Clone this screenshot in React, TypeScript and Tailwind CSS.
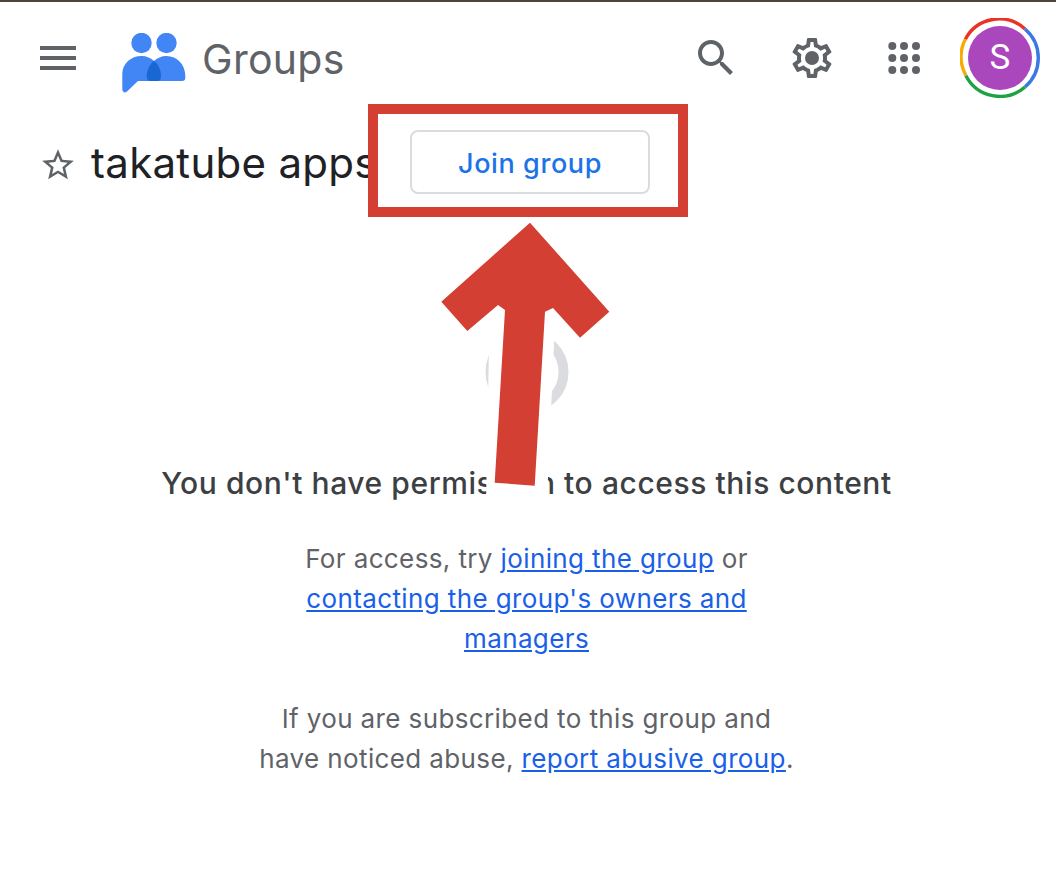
import React from 'react';

const Logo = () => (
  <svg width="64" height="60" viewBox="122 33 64 60" className="mt-[10px] ml-[46px] shrink-0">
    <circle cx="141.5" cy="43" r="10.2" fill="#4285f4" />
    <circle cx="166.5" cy="43" r="10.2" fill="#4285f4" />
    <path
      d="M122.3 74C122.3 63.5 131 56 141.5 56C146.5 56 151 58 154 61C157 58 161.5 56 166.5 56C177 56 185.3 64.5 185.3 76V78Q185.3 81 182 81H138L127 91.5Q123.5 94 122.3 90Z"
      fill="#4285f4"
    />
    <path
      d="M154 60.7C149.5 64.5 146.7 70 146.7 76.5Q146.7 81 151 81H157Q161 81 161 76.5C161 70 158.5 64.5 154 60.7Z"
      fill="#1967d2"
    />
  </svg>
);

const Avatar = () => (
  <div className="relative w-[80px] h-[80px] shrink-0 flex items-center justify-center">
    <svg width="80" height="80" viewBox="0 0 80 80" className="absolute top-0 left-0" fill="none" strokeWidth="3.4">
      <path d="M5.3 21.2A38.3 38.3 0 0 1 65 11" stroke="#ea3323" />
      <path d="M65 11A38.3 38.3 0 0 1 65 69" stroke="#3b78e7" />
      <path d="M65 69A38.3 38.3 0 0 1 5.8 57.4" stroke="#1fa245" />
      <path d="M5.8 57.4A38.3 38.3 0 0 1 5.3 21.2" stroke="#f9ab00" />
    </svg>
    <div className="w-[64px] h-[64px] rounded-full bg-[#ab47bc] flex items-center justify-center text-white text-[35px] font-['Roboto',sans-serif]">
      S
    </div>
  </div>
);

const AppsDots = () => (
  <svg width="48" height="48" viewBox="0 0 48 48" fill="#5f6368" className="ml-[44px] shrink-0">
    {[12.3, 24, 36].map((x) =>
      [12, 24, 36].map((y) => <circle key={`${x}-${y}`} cx={x} cy={y} r="4" />)
    )}
  </svg>
);

const App = () => {
  return (
    <div className="relative w-[1056px] h-[890px] overflow-hidden bg-white border-t-2 border-[#4f4439] font-['Inter',sans-serif]">
      <header className="h-[112px] flex items-center pl-[40px] pr-[16px]">
        <div className="w-[36px] flex flex-col gap-[6px] shrink-0">
          <div className="h-[4px] bg-[#5f6368]" />
          <div className="h-[4px] bg-[#5f6368]" />
          <div className="h-[4px] bg-[#5f6368]" />
        </div>
        <Logo />
        <span className="ml-[16px] mt-[3px] text-[41px] tracking-[0.3px] text-[#5f6368] leading-none">Groups</span>
        <svg width="48" height="48" viewBox="0 0 24 24" fill="#5f6368" className="ml-auto shrink-0">
          <path d="M15.5 14h-.79l-.28-.27C15.41 12.59 16 11.11 16 9.5 16 5.91 13.09 3 9.5 3S3 5.91 3 9.5 5.91 16 9.5 16c1.61 0 3.09-.59 4.23-1.57l.27.28v.79l5 4.99L20.49 19l-4.99-5zm-6 0C7.01 14 5 11.99 5 9.5S7.01 5 9.5 5 14 7.01 14 9.5 11.99 14 9.5 14z" />
        </svg>
        <svg width="48" height="48" viewBox="0 0 24 24" fill="#5f6368" className="ml-[48px] shrink-0">
          <path d="M19.43 12.98c.04-.32.07-.64.07-.98 0-.34-.03-.66-.07-.98l2.11-1.65c.19-.15.24-.42.12-.64l-2-3.46c-.09-.16-.26-.25-.44-.25-.06 0-.12.01-.17.03l-2.49 1c-.52-.4-1.08-.73-1.69-.98l-.38-2.65C14.46 2.18 14.25 2 14 2h-4c-.25 0-.46.18-.49.42l-.38 2.65c-.61.25-1.17.59-1.69.98l-2.49-1c-.06-.02-.12-.03-.18-.03-.17 0-.34.09-.43.25l-2 3.46c-.13.22-.07.49.12.64l2.11 1.65c-.04.32-.07.65-.07.98 0 .33.03.66.07.98l-2.11 1.65c-.19.15-.24.42-.12.64l2 3.46c.09.16.26.25.44.25.06 0 .12-.01.17-.03l2.49-1c.52.4 1.08.73 1.69.98l.38 2.65c.03.24.24.42.49.42h4c.25 0 .46-.18.49-.42l.38-2.65c.61-.25 1.17-.59 1.69-.98l2.49 1c.06.02.12.03.18.03.17 0 .34-.09.43-.25l2-3.46c.12-.22.07-.49-.12-.64l-2.11-1.65zm-1.98-1.71c.04.31.05.52.05.73 0 .21-.02.43-.05.73l-.14 1.13.89.7 1.08.84-.7 1.21-1.27-.51-1.04-.42-.9.68c-.43.32-.84.56-1.25.73l-1.06.43-.16 1.13-.2 1.35h-1.4l-.19-1.35-.16-1.13-1.06-.43c-.43-.18-.83-.41-1.23-.71l-.91-.7-1.06.43-1.27.51-.7-1.21 1.08-.84.89-.7-.14-1.13c-.03-.31-.05-.54-.05-.74s.02-.43.05-.73l.14-1.13-.89-.7-1.08-.84.7-1.21 1.27.51 1.04.42.9-.68c.43-.32.84-.56 1.25-.73l1.06-.43.16-1.13.2-1.35h1.39l.19 1.35.16 1.13 1.06.43c.43.18.83.41 1.23.71l.91.7 1.06-.43 1.27-.51.7 1.21-1.07.85-.89.7.14 1.13z" />
          <circle cx="12" cy="12" r="3.5" />
        </svg>
        <AppsDots />
        <div className="ml-[32px]">
          <Avatar />
        </div>
      </header>

      <div className="h-[96px] flex items-center pl-[39px]">
        <svg width="38" height="38" viewBox="0 0 24 24" fill="#5f6368" className="shrink-0 mt-[6px]">
          <path d="M22 9.24l-7.19-.62L12 2 9.19 8.63 2 9.24l5.46 4.73L5.82 21 12 17.27 18.18 21l-1.63-7.03L22 9.24zM12 15.4l-3.76 2.27 1-4.28-3.32-2.88 4.38-.38L12 6.1l1.71 4.04 4.38.38-3.32 2.88 1 4.28L12 15.4z" />
        </svg>
        <h1 className="ml-[14px] mt-[2px] w-[319px] shrink-0 whitespace-nowrap text-[42px] tracking-[0.3px] leading-none text-[#202124]">takatube apps</h1>
        <button className="relative z-20 w-[240px] h-[64px] pt-[5px] border-2 border-[#dadce0] rounded-lg bg-white text-[#1a73e8] text-[27px] tracking-[0.6px] font-medium">
          Join group
        </button>
      </div>

      <main className="flex flex-col items-center pr-[3px]">
        <svg width="84" height="84" viewBox="0 0 84 84" fill="none" className="mt-[120px]">
          <circle cx="42" cy="42" r="36.5" stroke="#dadce0" strokeWidth="10" />
        </svg>
        <h2 className="mt-[49px] text-[30px] leading-10 tracking-[0.58px] font-medium text-[#3c4043]">You don't have permission to access this content</h2>
        <p className="mt-[36px] text-center text-[26px] leading-10 tracking-[0.38px] text-[#5f6368]">
          For access, try <a className="underline text-[#1a5fe8]">joining the group</a> or<br />
          <a className="underline text-[#1a5fe8]">contacting the group's owners and<br />managers</a>
        </p>
        <p className="mt-[40px] text-center text-[26px] leading-10 tracking-[0.38px] text-[#5f6368]">
          If you are subscribed to this group and<br />
          have noticed abuse, <a className="underline text-[#1a5fe8]">report abusive group</a>.
        </p>
      </main>

      {/* annotation drawn over the page */}
      <svg width="1056" height="890" viewBox="0 2 1056 890" className="absolute top-0 left-0 pointer-events-none">
        <polygon points="490,300 556,300 547,500 486,500" fill="#ffffff" />
        <polygon
          points="530,222.7 609.3,311.7 580,337.7 553,308 545,311.7 534.7,485.7 494.7,482.7 505,310 498,305 467.3,331 441.3,301.7"
          fill="#d33f33"
        />
      </svg>
      <div className="absolute z-10 left-[368px] top-[102px] w-[320px] h-[113px] border-[10px] border-[#d33f33] bg-white" />
    </div>
  );
};

export default App;
